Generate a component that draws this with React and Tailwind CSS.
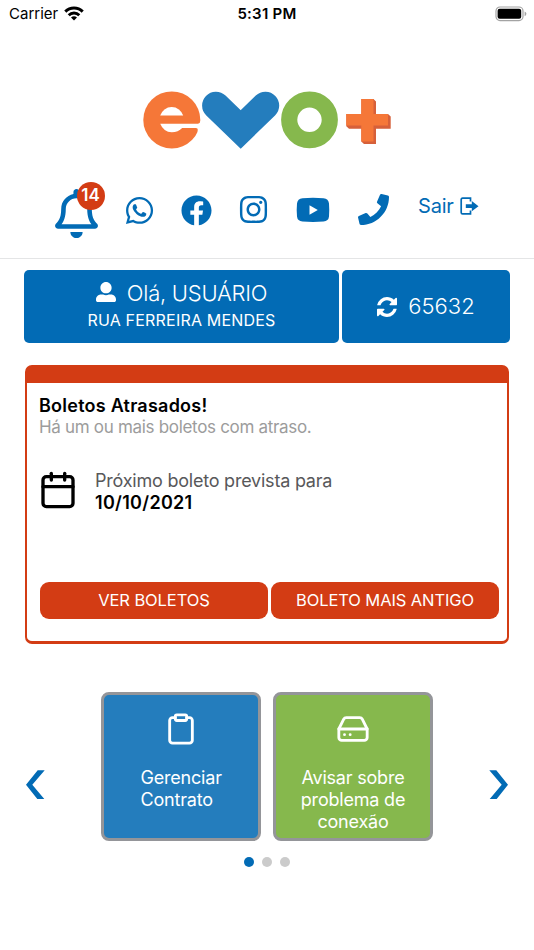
import React from "react";
import {
  FaRegBell,
  FaPhone,
  FaWhatsapp,
  FaFacebook,
  FaInstagram,
  FaUserAlt,
} from "react-icons/fa";
import { FiCalendar, FiClipboard, FiHardDrive } from "react-icons/fi";

function StatusBar() {
  return (
    <div className="grid h-7 grid-cols-3 items-center pl-[9px] pr-[7px] text-black">
      <div className="flex items-center gap-[6px]">
        <span className="text-[15px] leading-7">Carrier</span>
        <svg className="-mt-[2px]" width="20" height="15" viewBox="0 0 20 15">
          <path d="M10 14.6 7 11.600a4.300 4.300 0 0 1 6 0z" fill="#000" />
          <path d="M4.700 9.200a7.500 7.500 0 0 1 10.600 0" fill="none" stroke="#000" strokeWidth="2.900" />
          <path d="M1.300 5.600a12.300 12.300 0 0 1 17.400 0" fill="none" stroke="#000" strokeWidth="3" />
        </svg>
      </div>
      <span className="-ml-[2px] text-center text-[15px] font-semibold leading-7 tracking-[0.25px]">5:31 PM</span>
      <svg className="-mt-[1px] justify-self-end" width="32" height="16" viewBox="0 0 32 16">
        <rect x="1" y="1" width="27" height="13.6" rx="4" fill="none" stroke="#a3a3a3" strokeWidth="1.2" />
        <rect x="2.6" y="2.8" width="23.6" height="10" rx="2" fill="#000" />
        <path d="M29.6 5.4q1.8.8 1.8 2.4t-1.8 2.4z" fill="#a3a3a3" />
      </svg>
    </div>
  );
}

function Logo() {
  return (
    <svg className="ml-[142px] mt-[62px]" width="252" height="60" viewBox="142 90 252 60">
      <circle cx="171.8" cy="119.9" r="28.5" fill="#f57738" />
      <path d="M160.2 115.6a12 12 0 0 1 23 0z" fill="#fff" />
      <path d="M160.2 123.8H198q2-.3 2.4-2.6L204 121v14l-6.5-3.600q1-3.400-1.800-3.400h-13.500q-4 4.200-10.500 4.200-8 0-11.500-8.400z" fill="#fff" />
      <path d="M215.900 105.500 240.700 129.500 265.400 105.500" fill="none" stroke="#247dbd" strokeWidth="27.600" strokeLinecap="round" />
      <circle cx="309.500" cy="119.800" r="20.300" fill="none" stroke="#86b84d" strokeWidth="16.200" />
      <path d="M361.300 99H373.500l2.500 2.500V114h12l2.700 2.500v12.200H376V144H364l-2.700-2.500v-12.800H349l-2.700-2.500V114h15z" fill="#d6603a" />
      <path d="M361.300 99H373.500v15H388v11.600H373.500v16H361.300v-16h-15V114h15z" fill="#f57738" />
    </svg>
  );
}

function YoutubeIcon() {
  return (
    <svg className="ml-[27px] mt-[17px]" width="34" height="26" viewBox="0 0 34 26">
      <path
        d="M6.500 1.200Q17 .4 27.500 1.200Q32.500 1.600 33 6.500Q33.500 13 33 19.500Q32.500 24.200 27.500 24.500Q17 25.300 6.500 24.500Q1.500 24.200 1 19.500Q.4 13 1 6.500Q1.500 1.600 6.500 1.200ZM13.500 8.200V17.800L21.800 13Z"
        fill="currentColor"
      />
    </svg>
  );
}

function RefreshIcon() {
  return (
    <svg width="20" height="20" viewBox="0 0 1536 1536" fill="currentColor">
      <path d="M1511 928q0 5-1 7-64 268-268 434.500t-478 166.500q-146 0-282.500-55t-243.500-157l-129 129q-19 19-45 19t-45-19-19-45v-448q0-26 19-45t45-19h448q26 0 45 19t19 45-19 45l-137 137q71 66 161 102t187 36q134 0 250-65t186-179q11-17 53-117 8-23 30-23h192q13 0 22.500 9.500t9.500 22.500zm25-800v448q0 26-19 45t-45 19h-448q-26 0-45-19t-19-45 19-45l138-138q-148-137-349-137-134 0-250 65t-186 179q-11 17-53 117-8 23-30 23h-199q-13 0-22.500-9.500t-9.500-22.500v-7q65-268 270-434.500t480-166.500q146 0 284 55.500t245 156.500l130-129q19-19 45-19t45 19 19 45z" />
    </svg>
  );
}

function SocialRow() {
  return (
    <div className="mt-[30px] flex h-[60px] items-start text-[#026bb5]">
      <div className="relative ml-[52px] mt-[9px]">
        <FaRegBell size={49} />
        <span className="absolute -top-[7px] left-[25px] flex h-7 w-7 items-center justify-center rounded-full bg-[#d33c14] pr-px text-[17px] font-semibold text-white">
          14
        </span>
      </div>
      <FaWhatsapp className="ml-[23px] mt-[15px]" size={31} />
      <FaFacebook className="ml-[26px] mt-[15px]" size={31} />
      <FaInstagram className="ml-[26px] mt-[14px]" size={31} />
      <YoutubeIcon />
      <FaPhone className="ml-[28px] mt-[14px]" size={31} />
      <span className="ml-[29px] mt-3 text-[20px] leading-7 tracking-[-0.2px]">Sair</span>
      <svg className="ml-[6px] mt-[17px]" width="19" height="19" viewBox="0 0 19 19">
        <path d="M10.500 4.500V1.200H2.600Q1.200 1.200 1.200 2.600V15.400Q1.200 16.800 2.600 16.800H10.500V13.500" fill="none" stroke="currentColor" strokeWidth="1.700" />
        <path d="M5.800 7.300h6V4l6.700 5.200-6.700 5.100v-3.300h-6z" fill="currentColor" />
      </svg>
    </div>
  );
}

function Greeting() {
  return (
    <div className="ml-6 mt-[11px] flex h-[73px] w-[486px] gap-[3px] text-white">
      <div className="flex w-[315px] flex-col items-center rounded-[5px] bg-[#026bb5] pt-[9px]">
        <div className="flex items-center gap-[11px] text-[22px] font-light leading-7 tracking-[-0.25px]">
          <FaUserAlt size={20} className="-mt-[3px]" />
          <span>Olá, USUÁRIO</span>
        </div>
        <span className="text-base leading-[27px] tracking-[0.2px]">RUA FERREIRA MENDES</span>
      </div>
      <div className="flex flex-1 items-center justify-center gap-[11px] rounded-[5px] bg-[#026bb5] text-[22px] font-light">
        <RefreshIcon />
        <span>65632</span>
      </div>
    </div>
  );
}

function OverdueCard() {
  return (
    <div className="ml-[25px] mt-[22px] h-[279px] w-[484px] rounded-[7px] border-x-2 border-b-[3px] border-t-[18px] border-[#d33c14] px-3 pt-3">
      <h2 className="text-[18px] font-semibold leading-[22px] tracking-[0.24px] text-black">Boletos Atrasados!</h2>
      <p className="text-[17px] leading-[21px] tracking-[-0.31px] text-[#9c9c9c]">Há um ou mais boletos com atraso.</p>
      <div className="mt-[32px] flex">
        <FiCalendar size={40} className="-ml-[1px]" />
        <div className="ml-[17px] leading-[22px]">
          <p className="text-[18px] tracking-[-0.22px] text-[#58585a]">Próximo boleto prevista para</p>
          <p className="text-[18px] font-semibold tracking-[0.3px] text-black">10/10/2021</p>
        </div>
      </div>
      <div className="ml-[1px] mt-[68px] flex w-[459px] gap-[3px] text-[16.5px] tracking-[-0.1px] text-white">
        <button className="h-[37px] flex-1 rounded-[9px] bg-[#d33c14]">VER BOLETOS</button>
        <button className="h-[37px] flex-1 rounded-[9px] bg-[#d33c14]">BOLETO MAIS ANTIGO</button>
      </div>
    </div>
  );
}

function Carousel() {
  return (
    <div className="mt-12 flex items-start text-[18px] leading-[21.8px] tracking-[-0.2px] text-white">
      <svg className="ml-[25px] mt-[77px]" width="20" height="31" viewBox="0 0 20 31">
        <path d="M1 15.700 12.700 1.300h7L7.300 15.700l12 14.300h-7z" fill="#026bb5" />
      </svg>
      <div className="ml-[56px] flex h-[149px] w-[160px] flex-col items-center rounded-[8px] border-[3px] border-[#949599] bg-[#247dbd] pt-[17px]">
        <FiClipboard size={34} />
        <p className="mt-[21px] w-[81px]">Gerenciar Contrato</p>
      </div>
      <div className="ml-[12px] flex h-[149px] w-[160px] flex-col items-center rounded-[8px] border-[3px] border-[#949599] bg-[#86b84d] pt-[17px]">
        <FiHardDrive size={34} />
        <p className="mt-[21px] text-center">
          Avisar sobre<br />problema de<br />conexão
        </p>
      </div>
      <svg className="ml-[55px] mt-[77px]" width="20" height="31" viewBox="0 0 20 31">
        <path d="M20 15.700 8.300 1.300h-7L13.700 15.700l-12 14.300h7z" fill="#026bb5" />
      </svg>
    </div>
  );
}

export default function App() {
  return (
    <div className="flex h-[950px] w-[534px] flex-col overflow-hidden bg-white font-['Inter','Liberation_Sans',sans-serif]">
      <StatusBar />
      <header className="h-[231px] border-b border-[#e4e5e6]">
        <Logo />
        <SocialRow />
      </header>
      <Greeting />
      <OverdueCard />
      <Carousel />
      <div className="mt-4 flex justify-center gap-2">
        <span className="h-[10px] w-[10px] rounded-full bg-[#026bb5]" />
        <span className="h-[10px] w-[10px] rounded-full bg-[#cbcbcb]" />
        <span className="h-[10px] w-[10px] rounded-full bg-[#cbcbcb]" />
      </div>
    </div>
  );
}
